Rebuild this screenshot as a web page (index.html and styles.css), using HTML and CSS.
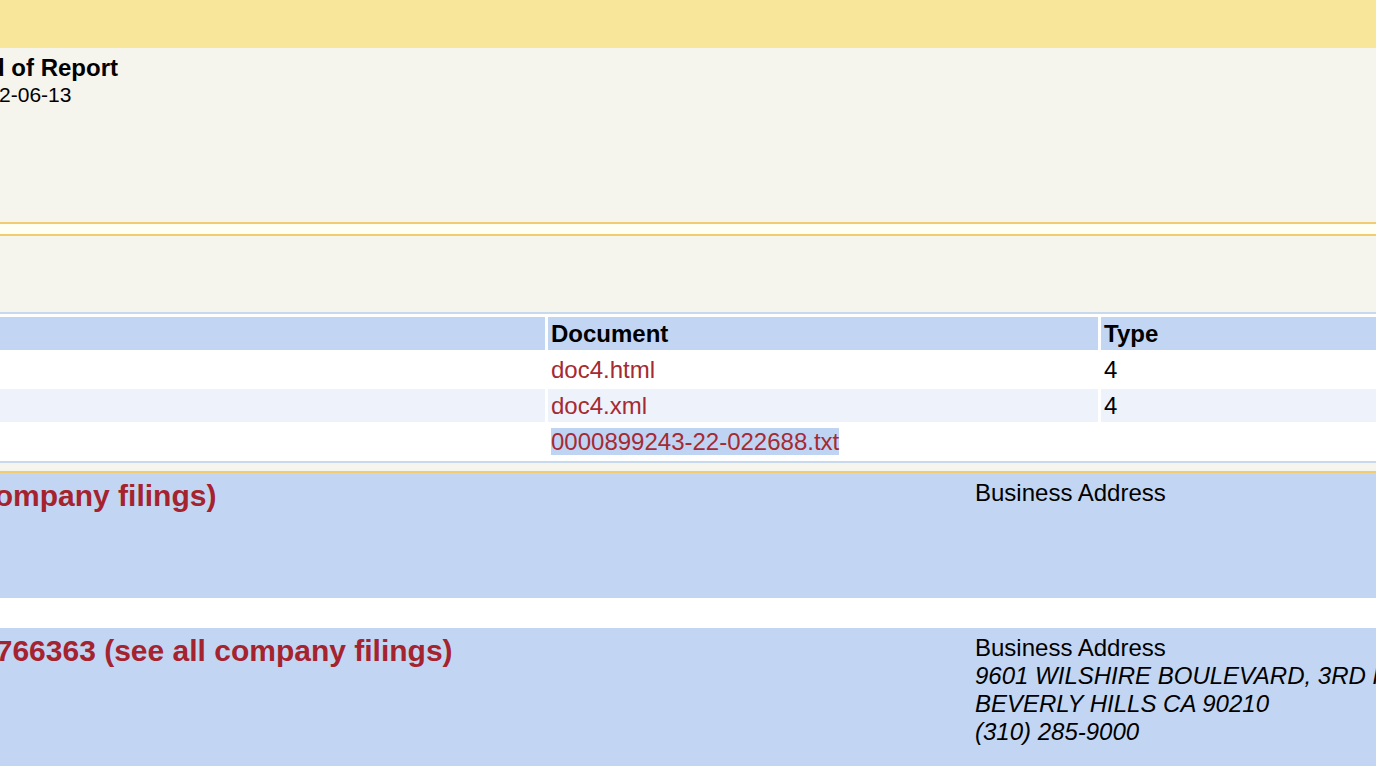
FILE: index.html
```html
<!DOCTYPE html>
<html lang="en">
<head>
    <meta charset="UTF-8">
    <title>Filing Detail</title>
    <link rel="stylesheet" href="styles.css">
</head>
<body>
    <div class="topbar"></div>

    <!-- form info -->
    <div class="form-info">
        <div class="grouping">
            <div class="info-head">Period of Report</div>
            <div class="info">2022-06-13</div>
        </div>
    </div>
    <div class="divider"></div>
    <div class="form-spacer"></div>

    <!-- document format files -->
    <table class="file-table">
        <tr>
            <th class="col-desc"></th>
            <th class="col-doc">Document</th>
            <th class="col-type">Type</th>
        </tr>
        <tr>
            <td></td>
            <td><a href="#">doc4.html</a></td>
            <td>4</td>
        </tr>
        <tr class="alt">
            <td></td>
            <td><a href="#">doc4.xml</a></td>
            <td>4</td>
        </tr>
        <tr>
            <td></td>
            <td><a href="#" class="selected">0000899243-22-022688.txt</a></td>
            <td></td>
        </tr>
    </table>
    <div class="after-table"></div>

    <!-- companies -->
    <div class="company company-first">
        <div class="company-name"><span class="name name-reporting">(see all company filings)</span></div>
        <div class="mailer">
            <div class="mailer-label">Business Address</div>
        </div>
    </div>
    <div class="company-gap"></div>
    <div class="company">
        <div class="company-name"><span class="name name-issuer">CIK: 0001766363 (see all company filings)</span></div>
        <div class="mailer">
            <div class="mailer-label">Business Address</div>
            <div class="address">9601 WILSHIRE BOULEVARD, 3RD FLOOR</div>
            <div class="address">BEVERLY HILLS CA 90210</div>
            <div class="address">(310) 285-9000</div>
        </div>
    </div>
</body>
</html>
```

FILE: styles.css
```css
body {
    margin: 0;
    overflow: hidden;
    font-family: "Liberation Sans", Arial, sans-serif;
    background-color: white;
    color: #000;
}
.topbar {
    height: 48px;
    background-color: #f8e79b;
}
.form-info {
    height: 174px;
    background-color: #f5f4ed;
    border-bottom: 2px solid #f0cc72;
}
.grouping {
    padding-top: 6px;
    white-space: nowrap;
}
.info-head {
    font-size: 24px;
    font-weight: bold;
    line-height: 27px;
    margin-left: -70px;
}
.info {
    font-size: 21px;
    line-height: 27px;
    margin-left: -36px;
}
.divider {
    height: 10px;
    background-color: #fffff4;
    border-bottom: 2px solid #f0cc72;
}
.form-spacer {
    height: 76px;
    background-color: #f5f4ed;
}
.file-table {
    table-layout: fixed;
    width: 1410px;
    margin-left: -3px;
    border-collapse: separate;
    border-spacing: 3px;
    border-top: 2px solid #c8d9ee;
    border-bottom: 2px solid #c8d9ee;
    font-size: 24px;
}
.file-table th,
.file-table td {
    box-sizing: border-box;
    padding: 3px 3px;
    line-height: 27px;
    text-align: left;
    white-space: nowrap;
}
.file-table th {
    background-color: #c2d6f3;
}
.col-desc {
    width: 545px;
}
.col-doc {
    width: 550px;
}
.file-table tr.alt td {
    background-color: #eef2fb;
}
.file-table a {
    color: #a52a33;
    text-decoration: none;
}
.file-table a.selected {
    background-color: #bfd4f3;
}
.after-table {
    height: 8px;
    background-color: #f5f4ed;
    border-bottom: 2px solid #f0cc72;
}
.company {
    display: flex;
    height: 160px;
    padding-top: 6px;
    box-sizing: border-box;
    background-color: #c2d6f3;
}
.company-first {
    height: 125px;
}
.company-gap {
    height: 30px;
}
.company-name {
    flex: none;
    width: 975px;
    white-space: nowrap;
}
.name {
    display: block;
    font-size: 30px;
    font-weight: bold;
    line-height: 34px;
    color: #a5232e;
}
.name-reporting {
    margin-left: -132px;
}
.name-issuer {
    margin-left: -141px;
}
.mailer {
    flex: 1;
    white-space: nowrap;
}
.mailer-label {
    font-size: 24px;
    line-height: 28px;
}
.address {
    font-size: 24px;
    font-style: italic;
    line-height: 28px;
}
```
